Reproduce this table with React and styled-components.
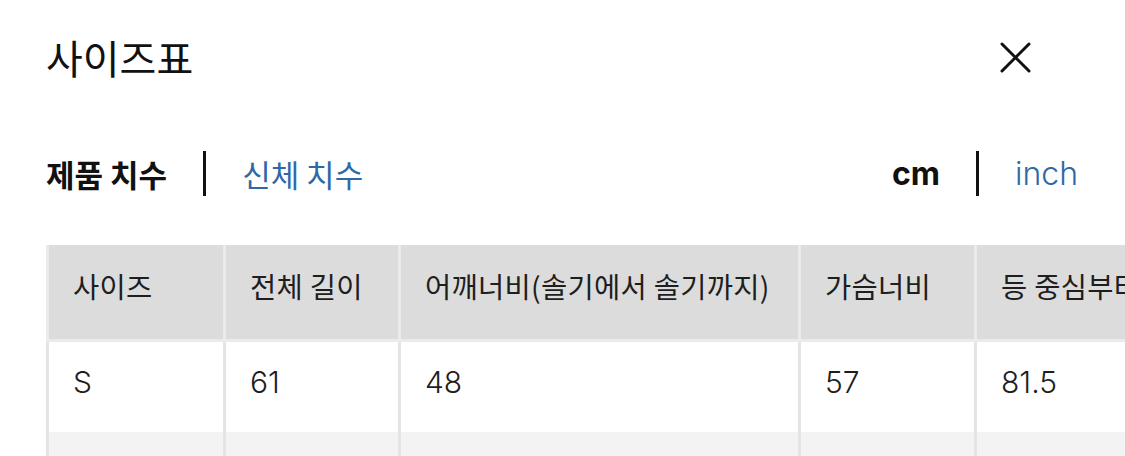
import React from "react";
import styled, { createGlobalStyle } from "styled-components";

const GlobalStyle = createGlobalStyle`
  html, body {
    margin: 0;
    padding: 0;
    background: #fff;
    overflow: hidden;
  }
  body {
    font-family: Inter, "Noto Sans CJK KR", sans-serif;
    color: #111;
  }
`;

const columns = [
  { label: '사이즈', width: 177 },
  { label: '전체 길이', width: 175 },
  { label: '어깨너비(솔기에서 솔기까지)', width: 400 },
  { label: '가슴너비', width: 176 },
  { label: '등 중심부터 소매 길이', width: 300 },
];

const rows = [
  ['S', '61', '48', '57', '81.5'],
  ['M', '63', '50', '60', '83'],
];

const SizeChart = () => {
  return (
    <Page>
      <GlobalStyle />
      <Header>
        <Title>사이즈표</Title>
        <CloseBtn aria-label="닫기">
          <svg width="31" height="31" viewBox="0 0 31 31" fill="none">
            <path d="M2 2L29 29M29 2L2 29" stroke="#111" strokeWidth="3" strokeLinecap="round" />
          </svg>
        </CloseBtn>
      </Header>

      <TabBar>
        <TabGroup>
          <Tab active>제품 치수</Tab>
          <Divider />
          <Tab>신체 치수</Tab>
        </TabGroup>
        <TabGroup>
          <Tab active latin>cm</Tab>
          <Divider />
          <Tab latin>inch</Tab>
        </TabGroup>
      </TabBar>

      <TableWrap>
        <Table>
          <colgroup>
            {columns.map((c) => (
              <col key={c.label} style={{ width: c.width }} />
            ))}
          </colgroup>
          <thead>
            <tr>
              {columns.map((c) => (
                <Th key={c.label}>{c.label}</Th>
              ))}
            </tr>
          </thead>
          <tbody>
            {rows.map((r, i) => (
              <Tr key={r[0]} striped={i % 2 === 1}>
                {r.map((v, j) => (
                  <Td key={j}>{v}</Td>
                ))}
              </Tr>
            ))}
          </tbody>
        </Table>
      </TableWrap>
    </Page>
  );
};

export default function App() {
  return <SizeChart />;
}

const Page = styled.div`
  width: 1125px;
  height: 456px;
  overflow: hidden;
  padding: 34px 47px 0 46px;
  box-sizing: border-box;
`;

const Header = styled.div`
  display: flex;
  align-items: center;
  justify-content: space-between;
  height: 47px;
`;

const Title = styled.h1`
  margin: 0;
  font-family: "Noto Sans CJK KR", sans-serif;
  font-size: 40px;
  font-weight: 400;
  line-height: 47px;
  color: #111;
`;

const CloseBtn = styled.button`
  border: 0;
  padding: 0;
  background: none;
  margin-right: 47px;
  display: flex;
  cursor: pointer;
`;

const TabBar = styled.div`
  margin-top: 70px;
  display: flex;
  align-items: center;
  justify-content: space-between;
  height: 45px;
`;

const TabGroup = styled.div`
  display: flex;
  align-items: center;
  gap: 36px;
`;

const Tab = styled.span`
  font-family: ${(props) => props.latin ? 'Inter, "Noto Sans CJK KR", sans-serif' : '"Noto Sans CJK KR", sans-serif'};
  font-size: ${(props) => props.latin ? '32px' : '31px'};
  font-weight: ${(props) => props.active ? 700 : (props.latin ? 300 : 400)};
  color: ${(props) => props.active ? '#111' : '#2f68a6'};
  line-height: 1;
  cursor: pointer;
`;

const Divider = styled.span`
  width: 3px;
  height: 45px;
  background: #111;
`;

const TableWrap = styled.div`
  margin-top: 49px;
  width: 1300px;
`;

const Table = styled.table`
  table-layout: fixed;
  border-collapse: collapse;
  width: 1228px;
  font-family: Inter, "Noto Sans CJK KR", sans-serif;
  color: #1e1e1e;
`;

const Th = styled.th`
  height: 95px;
  box-sizing: border-box;
  background: #dcdcdc;
  border: 3px solid #ebebeb;
  border-top: 0;
  padding: 23px 24px 0;
  text-align: left;
  vertical-align: top;
  font-family: "Noto Sans CJK KR", sans-serif;
  font-size: 28.5px;
  font-weight: 400;
  letter-spacing: 0.3px;
  line-height: 35px;
  white-space: nowrap;
  overflow: hidden;
`;

const Tr = styled.tr`
  background: ${(props) => props.striped ? '#f3f3f3' : '#fff'};
`;

const Td = styled.td`
  height: 92px;
  box-sizing: border-box;
  border: 3px solid #e4e4e4;
  border-top: 0;
  border-bottom: 0;
  padding: 23px 24px 0;
  vertical-align: top;
  font-size: 30px;
  font-weight: 300;
  line-height: 35px;
`;
